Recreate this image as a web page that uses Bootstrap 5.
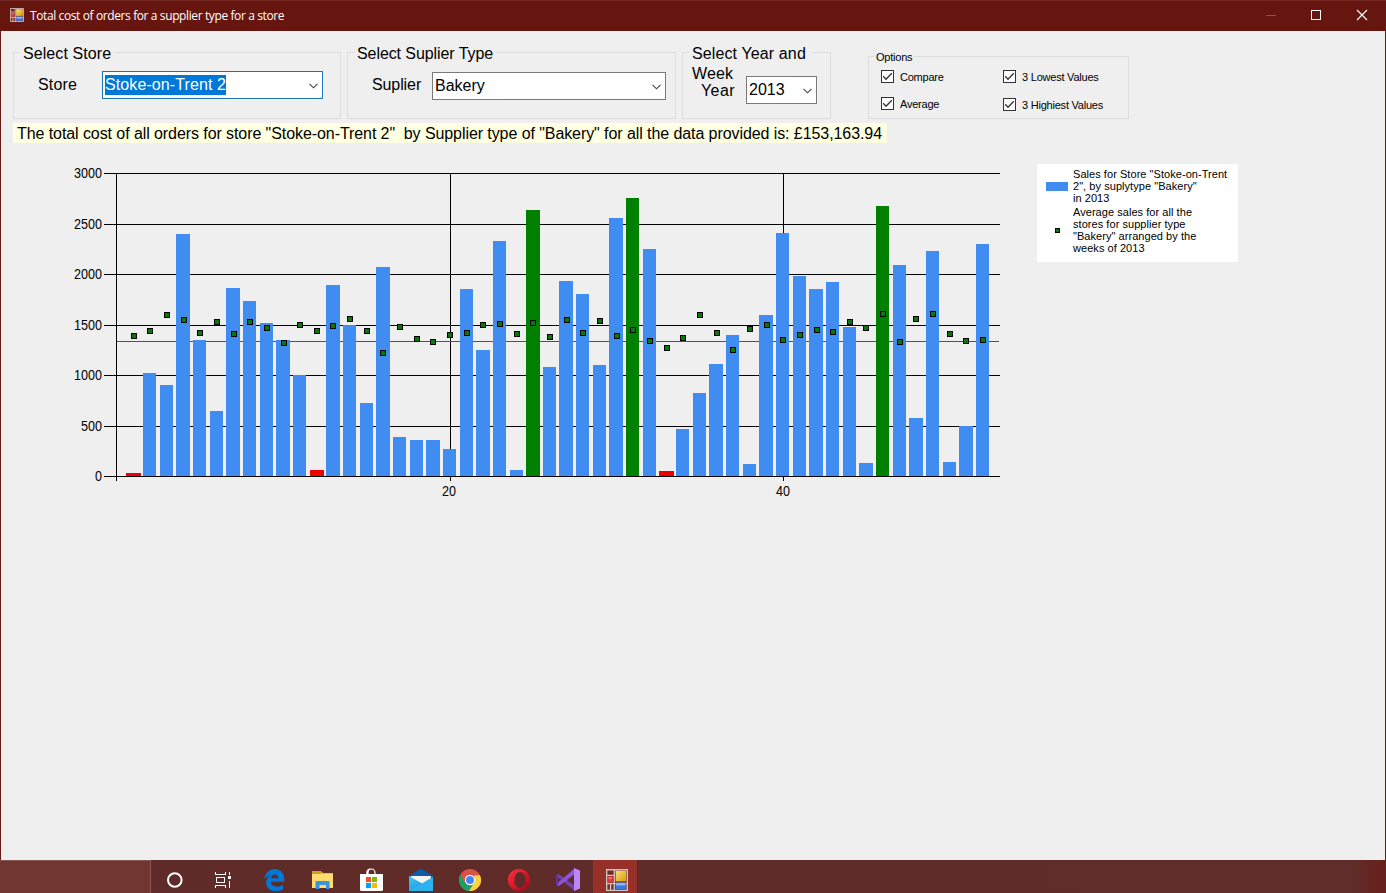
<!DOCTYPE html>
<html lang="en">
<head>
<meta charset="utf-8">
<title>Total cost of orders for a supplier type for a store</title>
<link href="https://cdn.jsdelivr.net/npm/bootstrap@5.3.0/dist/css/bootstrap.min.css" rel="stylesheet">
<style>
  body { font-family: "Liberation Sans", Arial, sans-serif; font-size: 16px; line-height: 20px; color: #000; background: #efefef; }
  .titlebar { height: 31px; background: #66150f; border-top: 1px solid #742620; color: #fff; padding: 0 0 2px 10px; font: 12px "Open Sans", sans-serif; letter-spacing: -.39px; }
  .winbody { border: solid #661a16; border-width: 0 1px; padding: 21px 0 0 12px; }
  .group { border: 1px solid #dcdcdc; height: 67px; }
  .caption-text { display: block; width: max-content; margin: -9px 0 0 6px; padding: 0 3px; background: #efefef; white-space: nowrap; }
  .combo { height: 28px; border: 1px solid #7a7a7a; background: #fff; padding: 0 3px 0 2px; }
  .combo.active { border-color: #1a75bb; }
  .combo svg { margin: 2px 1px 0 0; }
  .picked { background: #0078d7; color: #fff; letter-spacing: .1px; }
  .opts { height: 63px; font-size: 11px; line-height: 14px; letter-spacing: -.22px; }
  .opts .caption-text { margin: -7px 0 0 5px; padding: 0 2px; }
  .opts .col-a { width: 122px; }
  .opts span.lbl { padding-top: 1px; margin-bottom: -1px; }
  .tick { width: 13px; height: 13px; border: 1px solid #333; background: #fff; margin-right: 6px; }
  .total { width: 874px; height: 20px; margin-top: 4px; background: #ffffe1; padding: 1px 0 0 4px; white-space: pre; letter-spacing: -.078px; }
  .chart-legend { width: 201px; height: 98px; background: #fff; margin: 21px 0 0 37px; font-size: 11px; line-height: 12px; padding: 4px 0 0 9px; letter-spacing: .05px; }
  .chart-legend .keycol { width: 27px; }
  .swatch { width: 22px; height: 9px; background: #418cf0; }
  .dot { width: 5px; height: 5px; margin-left: 9px; background: #087808; border: 1px solid #000; }
  .taskbar { height: 33px; background: linear-gradient(90deg, #5f2b29 0, #602d2a 1352px, #68201b 1386px); }
  .searchbox { width: 151px; background: #713532; border: solid #8a5653; border-width: 1px 1px 0 0; }
  .tasks svg { display: block; }
</style>
</head>
<body class="vh-100 overflow-hidden d-flex flex-column">
<header class="titlebar d-flex align-items-center">
  <svg width="14" height="14" viewBox="0 0 24 24" class="me-0"><use href="#formicon"/></svg>
  <span style="margin-left:6px">Total cost of orders for a supplier type for a store</span>
  <svg class="ms-auto" width="120" height="28" fill="none" shape-rendering="crispEdges">
    <path d="M0 14.5h10" stroke="#91504b"/>
    <path d="M45.500 9.500h9v9h-9z" stroke="#fff"/>
    <path d="M91 9l10 10M101 9L91 19" stroke="#fff" shape-rendering="auto" stroke-width="1.2"/>
  </svg>
</header>

<main class="winbody flex-grow-1">
  <div class="d-flex align-items-start">
    <section class="group" style="width:328px">
      <span class="caption-text" style="letter-spacing:.08px">Select Store</span>
      <div class="d-flex" style="margin:7px 17px 0 24px">
        <label style="width:64px;padding-top:4px;letter-spacing:.15px">Store</label>
        <div class="combo active flex-grow-1 d-flex align-items-center justify-content-between"><span class="picked">Stoke-on-Trent 2</span><svg width="9" height="6"><use href="#chev"/></svg></div>
      </div>
    </section>
    <section class="group" style="width:329px;margin-left:6px">
      <span class="caption-text" style="letter-spacing:-.08px">Select Suplier Type</span>
      <div class="d-flex" style="margin:8px 9px 0 24px">
        <label style="width:60px;padding-top:3px;letter-spacing:-.1px">Suplier</label>
        <div class="combo flex-grow-1 d-flex align-items-center justify-content-between"><span>Bakery</span><svg width="9" height="6"><use href="#chev"/></svg></div>
      </div>
    </section>
    <section class="group" style="width:149px;margin-left:6px">
      <span class="caption-text" style="width:123px;letter-spacing:.12px">Select Year and<br>Week</span>
      <div class="d-flex" style="margin:-8px 13px 0 18px">
        <label style="width:45px;padding-top:5px;letter-spacing:.4px">Year</label>
        <div class="combo flex-grow-1 d-flex align-items-center justify-content-between"><span>2013</span><svg width="9" height="6"><use href="#chev"/></svg></div>
      </div>
    </section>
    <section class="group opts" style="width:261px;margin:4px 0 0 37px">
      <span class="caption-text">Options</span>
      <div class="d-flex" style="padding:5px 0 0 12px">
        <div class="col-a">
          <div class="d-flex align-items-center"><svg class="tick" viewBox="0 0 11 11"><use href="#check"/></svg><span class="lbl">Compare</span></div>
          <div class="d-flex align-items-center" style="margin-top:13px"><svg class="tick" viewBox="0 0 11 11"><use href="#check"/></svg><span class="lbl">Average</span></div>
        </div>
        <div>
          <div class="d-flex align-items-center"><svg class="tick" viewBox="0 0 11 11"><use href="#check"/></svg><span class="lbl">3 Lowest Values</span></div>
          <div class="d-flex align-items-center" style="margin-top:14px"><svg class="tick" viewBox="0 0 11 11"><use href="#check"/></svg><span class="lbl">3 Highiest Values</span></div>
        </div>
      </div>
    </section>
  </div>
  <div class="total">The total cost of all orders for store "Stoke-on-Trent 2"  by Supplier type of "Bakery" for all the data provided is: £153,163.94</div>

  <div class="d-flex align-items-start">
    <svg id="chart" width="940" height="350" viewBox="60 160 940 350" style="margin:17px 0 0 47px" shape-rendering="crispEdges" font-size="14"></svg>
    <aside class="chart-legend">
      <div class="d-flex align-items-center"><div class="keycol"><div class="swatch"></div></div><div>Sales for Store "Stoke-on-Trent<br>2", by suplytype "Bakery"<br>in 2013</div></div>
      <div class="d-flex align-items-center" style="margin-top:2px"><div class="keycol"><div class="dot"></div></div><div>Average sales for all the<br>stores for supplier type<br>"Bakery" arranged by the<br>weeks of 2013</div></div>
    </aside>
  </div>
</main>

<footer class="taskbar d-flex">
  <div class="searchbox flex-shrink-0"></div>
  <svg class="tasks" width="490" height="33" viewBox="151 860 490 33">
    <defs>
      <linearGradient id="gold" x2="1" y2="1"><stop stop-color="#fbe27c"/><stop offset="1" stop-color="#d99a00"/></linearGradient>
      <linearGradient id="opr" x2="1" y2="1"><stop stop-color="#ff3340"/><stop offset="1" stop-color="#a70014"/></linearGradient>
      <linearGradient id="mailg" x2="1" y2="1"><stop stop-color="#45c9f5"/><stop offset="1" stop-color="#1082d2"/></linearGradient>
      <symbol id="formicon" viewBox="0 0 24 24">
        <path fill="#702c29" stroke="#d0c4be" stroke-width="1.5" d="M.75.75h22.5v22.5H.75z"/>
        <path stroke="#d0c4be" stroke-width="1.5" d="M9 1v22M1 7h8M1 16h22M5 16v7"/>
        <path fill="url(#gold)" d="M10.500 2H22v11.500H10.500z"/>
        <path fill="#d93a3c" d="M2 8h6v7H2z"/><path fill="#ef8585" d="M3 9h3v2H3z"/>
        <path fill="#3a78dc" d="M10.500 15H22v7H10.500z"/><path fill="#8cb6f5" d="M11 15h10v3H11z"/>
      </symbol>
      <symbol id="chev" viewBox="0 0 9 6"><path d="M.5.8l4 4 4-4" fill="none" stroke="#444" stroke-width="1.1"/></symbol>
      <symbol id="check" viewBox="0 0 11 11"><path d="M1.200 5.300l2.800 2.900L9.800 2.200" fill="none" stroke="#333" stroke-width="1.300"/></symbol>
    </defs>
    <circle cx="174.800" cy="880" r="6.800" fill="none" stroke="#fff" stroke-width="2"/>
    <g fill="none" stroke="#fff" shape-rendering="crispEdges"><path d="M215.500 872v2.500h10V872M215.500 888v-2.500h10v2.500M216.500 877.500h8v5h-8zM229.500 872v3M229.500 881v7"/><path fill="#fff" stroke="none" d="M228 876h3v3h-3z"/></g>
    <path fill="#0078d7" d="M264.200 879.500c.8-6.200 4.800-10.500 10.400-10.500 5.900 0 9.700 4.300 9.700 10v2.800h-13.400c.2 3.600 3 4.800 6 4.800 2.400 0 4.600-.6 6.200-1.500v4.400c-2 1.100-4.600 1.700-7.500 1.700-5.800 0-9.400-3.500-9.400-8.700 0-3.300 1.600-6.100 4.500-7.800-3 .6-5 2.200-6.500 4.800zm6.900-1.200h7.200c-.1-2.400-1.200-3.800-3.500-3.800-2.200 0-3.400 1.400-3.700 3.800z"/>
    <path fill="#d99d1d" d="M312 871h9l2 2h10v4h-21z"/><path fill="#ffdc72" d="M312 873.500h21V888h-21z"/><path fill="#c98e12" d="M312 873h8l1 .8h-9z"/><path fill="#3b94d9" d="M315.500 889v-8h14v8h-3.500v-4h-6.500v4z"/>
    <path d="M368 874v-1a3.500 4 0 0 1 7 0v1M366.800 874v-1a3.500 4 0 0 1 3.500-4" fill="none" stroke="#fff" stroke-width="1.200"/><path fill="#fff" d="M360 874h23v15.500q0 1.500-1.500 1.500h-20q-1.500 0-1.500-1.500z"/>
    <path fill="#f25022" d="M366 877h5v5h-5z"/><path fill="#7fba00" d="M372 877h5v5h-5z"/><path fill="#00a4ef" d="M366 883h5v5h-5z"/><path fill="#ffb900" d="M372 883h5v5h-5z"/>
    <path fill="#0b5cab" d="M409 876l12-7.500 12 7.500v3h-24z"/><path fill="#f4f4f4" d="M411 876h20v9h-20z"/><path fill="url(#mailg)" d="M409 876l14 8 10-7v14h-24z"/><path fill="#2ab3ee" d="M409 891l24-14v14z"/>
    <g><circle cx="470" cy="880" r="11" fill="#dc5046"/><path fill="#1ba261" d="M460.500 874.500A11 11 0 0 0 469 891l5.500-8-9.500 0z"/><path fill="#fed23d" d="M479.900 875.200A11 11 0 0 1 469 891l5.300-8.500V875.200z"/><circle cx="470" cy="880" r="5.200" fill="#fff"/><circle cx="470" cy="880" r="4" fill="#4285f4"/></g>
    <path fill="url(#opr)" fill-rule="evenodd" d="M519 869a11.200 11 0 1 0 0 22 11.200 11 0 1 0 0-22zm1 3c3.500 0 5.500 3.800 5.500 8s-2 8-5.500 8-5.500-3.800-5.500-8 2-8 5.500-8z"/>
    <path fill="#7340b8" d="M556 875.500l2.500-1.500L575 886v5z"/><path fill="#8e56d8" d="M556 884.500l2.500 1.800L575 874v-6z"/><path fill="#65349f" d="M556 875.500l2.200-1v11.500l-2.200-1.500z"/><path fill="#b987f7" d="M574 868l6 2.500v18l-6 2.500z"/>
    <path fill="#963029" d="M593 860h44v33h-44z"/><path fill="#64201d" d="M637 860h1v33h-1z"/>
    <svg x="606" y="869" width="22" height="22" viewBox="0 0 24 24"><use href="#formicon"/></svg>
  </svg>
</footer>
<script src="https://cdn.jsdelivr.net/npm/bootstrap@5.3.0/dist/js/bootstrap.bundle.min.js"></script>
<script>
// Top edge of each weekly bar and centre of each average marker, in chart units.
const tops = [473,373,385,234,340,411,288,301,323,340,375,470,285,325,403,267,437,440,440,449,289,350,241,470,210,367,281,294,365,218,198,249,471,429,393,364,335,464,315,233,276,289,282,327,463,206,265,418,251,462,426,244];
const avgs = [336,331,315,320,333,322,334,322,328,343,325,331,326,319,331,353,327,339,342,335,333,325,324,334,323,337,320,333,321,336,330,341,348,338,315,333,350,329,325,340,335,330,332,322,328,314,342,319,314,334,341,340];
const lowest = [1, 12, 33], highest = [25, 31, 46];
let out = '';
[173,224,274,325,375,426,476].forEach((y, i) => {
  out += `<rect x="104" y="${y}" width="896" height="1"/>`;
  const label = String(3000 - i * 500), w = label.length * 7;
  out += `<text x="${102 - w}" y="${y + 5}" textLength="${w}" lengthAdjust="spacingAndGlyphs">${label}</text>`;
});
out += '<path d="M116 173h1v308h-1zM450 173h1v308h-1zM783 173h1v308h-1z"/><rect x="117" y="341" width="882" height="1" fill="#cc1c20"/>';
out += '<text x="442" y="496" textLength="14" lengthAdjust="spacingAndGlyphs">20</text><text x="776" y="496" textLength="14" lengthAdjust="spacingAndGlyphs">40</text>';
tops.forEach((y, i) => {
  const n = i + 1, low = lowest.includes(n);
  const x = Math.round(109.8 + 16.655 * n), end = low ? x + 14 + (n !== 12) : Math.round(123.14 + 16.655 * n);
  const fill = low ? '#f00000' : highest.includes(n) ? '#008000' : '#418cf0';
  out += `<rect x="${x}" y="${y}" width="${end - x}" height="${476 - y}" fill="${fill}"/>`;
});
avgs.forEach((y, i) => {
  const x = Math.round(116.97 + 16.656 * (i + 1));
  out += `<rect x="${x - 3}" y="${y - 3}" width="6" height="6"/><rect x="${x - 2}" y="${y - 2}" width="4" height="4" fill="#087808"/>`;
});
document.getElementById('chart').innerHTML = out;
</script>
</body>
</html>
